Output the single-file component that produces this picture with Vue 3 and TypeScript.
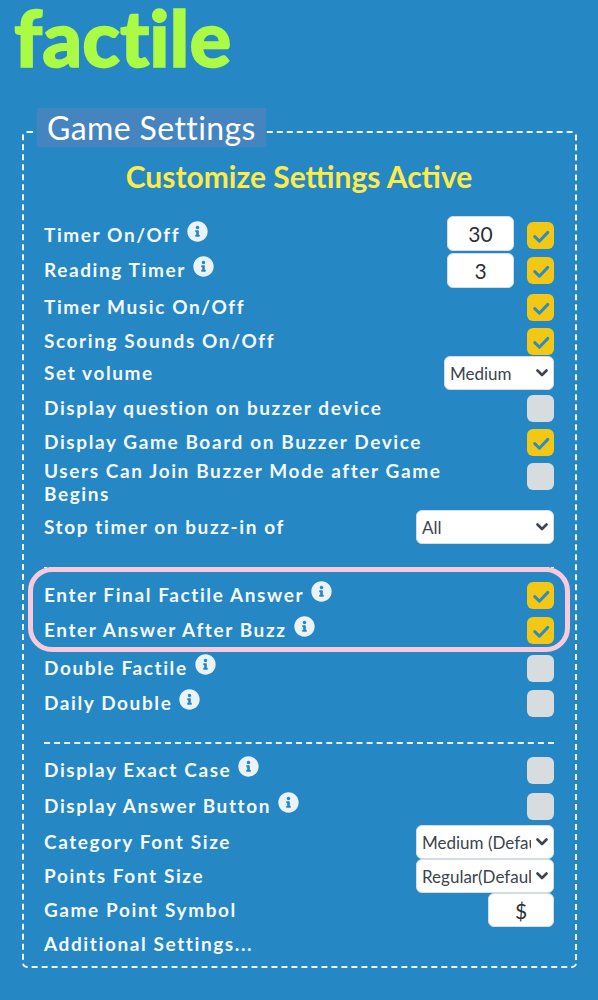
<script setup lang="ts">
interface Row {
  label: string
  h: number
  info?: boolean
  checked?: boolean
  input?: { value: string; cls: string }
  select?: { value: string; options: string[]; cls: string }
  wrap?: boolean
}
const first: Row[] = [
  { label: 'Timer On/Off', h: 34, info: true, checked: true, input: { value: '30', cls: 'num up' } },
  { label: 'Reading Timer', h: 36, info: true, checked: true, input: { value: '3', cls: 'num' } },
  { label: 'Timer Music On/Off', h: 38, checked: true },
  { label: 'Scoring Sounds On/Off', h: 30, checked: true },
  { label: 'Set volume', h: 34, select: { value: 'Medium', options: ['Low', 'Medium', 'High'], cls: 'sel-m' } },
  { label: 'Display question on buzzer device', h: 36, checked: false },
  { label: 'Display Game Board on Buzzer Device', h: 32, checked: true },
  { label: 'Users Can Join Buzzer Mode after Game Begins', h: 50, checked: false, wrap: true },
  { label: 'Stop timer on buzz-in of', h: 38, select: { value: 'All', options: ['All', 'First'], cls: 'sel-l' } }
]
const second: Row[] = [
  { label: 'Enter Final Factile Answer', h: 36, info: true, checked: true },
  { label: 'Enter Answer After Buzz', h: 34, info: true, checked: true },
  { label: 'Double Factile', h: 42, info: true, checked: false },
  { label: 'Daily Double', h: 28, info: true, checked: false }
]
const third: Row[] = [
  { label: 'Display Exact Case', h: 36, info: true, checked: false },
  { label: 'Display Answer Button', h: 36, info: true, checked: false },
  { label: 'Category Font Size', h: 36, select: { value: 'Medium (Default)', options: ['Small', 'Medium (Default)', 'Large'], cls: 'sel-l' } },
  { label: 'Points Font Size', h: 32, select: { value: 'Regular(Default)', options: ['Regular(Default)', 'Large'], cls: 'sel-l' } },
  { label: 'Game Point Symbol', h: 36, input: { value: '$', cls: 'sym' } },
  { label: 'Additional Settings...', h: 32 }
]
const sections = [
  { rows: first, cls: 'sec-a' },
  { rows: second, cls: 'sec-b' },
  { rows: third, cls: 'sec-c' }
]
const infoPath =
  'M256 8C119.043 8 8 119.083 8 256c0 137 111.043 248 248 248s248-111 248-248C504 119.083 392.957 8 256 8zm0 110c23.196 0 42 18.804 42 42s-18.804 42-42 42-42-18.804-42-42 18.804-42 42-42zm56 254c0 6.627-5.373 12-12 12h-88c-6.627 0-12-5.373-12-12v-24c0-6.627 5.373-12 12-12h12v-64h-12c-6.627 0-12-5.373-12-12v-24c0-6.627 5.373-12 12-12h64c6.627 0 12 5.373 12 12v100h12c6.627 0 12 5.373 12 12v24z'
</script>

<template>
  <div class="page">
    <header class="logo">factile</header>
    <section class="settings">
      <h2 class="legend">Game Settings</h2>
      <h3 class="active">Customize Settings Active</h3>
      <div v-for="s in sections" :key="s.cls" class="group" :class="s.cls">
        <div v-for="r in s.rows" :key="r.label" class="row" :class="{ wrap: r.wrap }" :style="{ height: r.h + 'px' }">
          <div class="label">
            <span>{{ r.label }}</span>
            <svg v-if="r.info" class="info" viewBox="0 0 512 512"><path :d="infoPath" fill="currentColor" /></svg>
          </div>
          <div class="controls">
            <input v-if="r.input" class="field" :class="r.input.cls" type="text" :value="r.input.value" />
            <div v-if="r.select" class="select" :class="r.select.cls">
              <select :value="r.select.value">
                <option v-for="o in r.select.options" :key="o">{{ o }}</option>
              </select>
              <svg class="chev" viewBox="0 0 12 8"><path d="M1.5 1.5 6 6l4.5-4.5" fill="none" stroke="currentColor" stroke-width="2.6" stroke-linecap="round" stroke-linejoin="round" /></svg>
            </div>
            <span v-if="r.checked !== undefined" class="box" :class="{ on: r.checked }">
              <svg v-if="r.checked" viewBox="0 0 27 27"><path d="M7.8 14.6l4.6 4.6L20.8 10.4" fill="none" stroke="#2f8cc2" stroke-width="3" stroke-linecap="round" stroke-linejoin="round" /></svg>
            </span>
          </div>
        </div>
      </div>
      <div class="highlight"></div>
    </section>
  </div>
</template>

<style>
html, body { margin: 0; background: #2587c4; }
</style>

<style scoped>
.page {
  width: 598px;
  height: 1000px;
  background: #2587c4;
  overflow: hidden;
  font-family: Lato, "Open Sans", sans-serif;
  color: #f4f9fc;
}
.logo {
  height: 108px;
  padding-left: 14px;
  box-sizing: border-box;
  font-family: Lato, sans-serif;
  font-weight: 900;
  font-size: 78px;
  line-height: 75px;
  font-variant-ligatures: none;
  -webkit-text-stroke: 1.5px #abfb45;
  color: #abfb45;
}
.settings {
  position: relative;
  margin: 23px 21px 0 22px;
  height: 837px;
  box-sizing: border-box;
  border: 2px dashed #f1f7fb;
  border-radius: 5px;
  padding: 0 21px 0 20px;
}
.legend {
  position: absolute;
  left: 13px;
  top: -25px;
  margin: 0;
  width: 229px;
  height: 39px;
  box-sizing: border-box;
  padding-left: 10px;
  background: #4485c0;
  font-size: 32px;
  line-height: 39px;
  font-weight: 400;
  color: #fff;
  letter-spacing: 0.4px;
}
.active {
  margin: 0;
  padding-top: 26px;
  height: 85px;
  box-sizing: border-box;
  text-align: center;
  font-size: 30px;
  line-height: 34px;
  font-weight: 700;
  color: #fdeb4c;
}
.sec-b {
  margin-top: 21px;
  padding-top: 9px;
  border-top: 1px dashed #f1f7fb;
}
.sec-c {
  margin-top: 25px;
  padding-top: 8px;
  border-top: 2px dashed #e6f1f8;
}
.row {
  display: flex;
  align-items: center;
  justify-content: space-between;
}
.row.wrap .controls { align-self: flex-start; padding-top: 5px; }
.label {
  display: flex;
  align-items: center;
  gap: 7px;
  font-size: 19px;
  line-height: 23px;
  font-weight: 700;
  letter-spacing: 1.6px;
  max-width: 430px;
  padding-bottom: 2px;
}
.info { width: 21px; height: 21px; flex: none; margin-top: -5px; color: #e9f3f9; }
.controls { display: flex; align-items: center; gap: 13px; }
.field {
  box-sizing: border-box;
  border: 1px solid #d4dde4;
  border-radius: 6px;
  background: #fff;
  text-align: center;
  font-family: Lato, sans-serif;
  font-size: 21px;
  color: #2b3138;
  padding: 0;
  outline: none;
}
.num { width: 67px; height: 35px; }
.up { margin-top: -3px; }
.sym { width: 66px; height: 34px; }
.select { position: relative; height: 34px; color: #3b4450; }
.select select {
  appearance: none;
  width: 100%;
  height: 100%;
  box-sizing: border-box;
  border: 1px solid #d4dde4;
  border-radius: 6px;
  background: #fff;
  font-family: Lato, sans-serif;
  font-size: 17px;
  color: #3b4450;
  padding: 0 22px 0 5px;
}
.sel-m { width: 110px; }
.sel-l { width: 138px; }
.chev { position: absolute; right: 6px; top: 13px; width: 12px; height: 8px; pointer-events: none; }
.box {
  width: 27px;
  height: 27px;
  border-radius: 6px;
  background: #d7dcdf;
  flex: none;
  display: block;
}
.box.on { background: #f2c814; }
.box svg { display: block; width: 27px; height: 27px; }
.highlight {
  position: absolute;
  left: 4px;
  top: 434px;
  width: 542px;
  height: 85px;
  box-sizing: border-box;
  border: 5px solid #f9c9dc;
  border-radius: 24px;
  pointer-events: none;
}
</style>
